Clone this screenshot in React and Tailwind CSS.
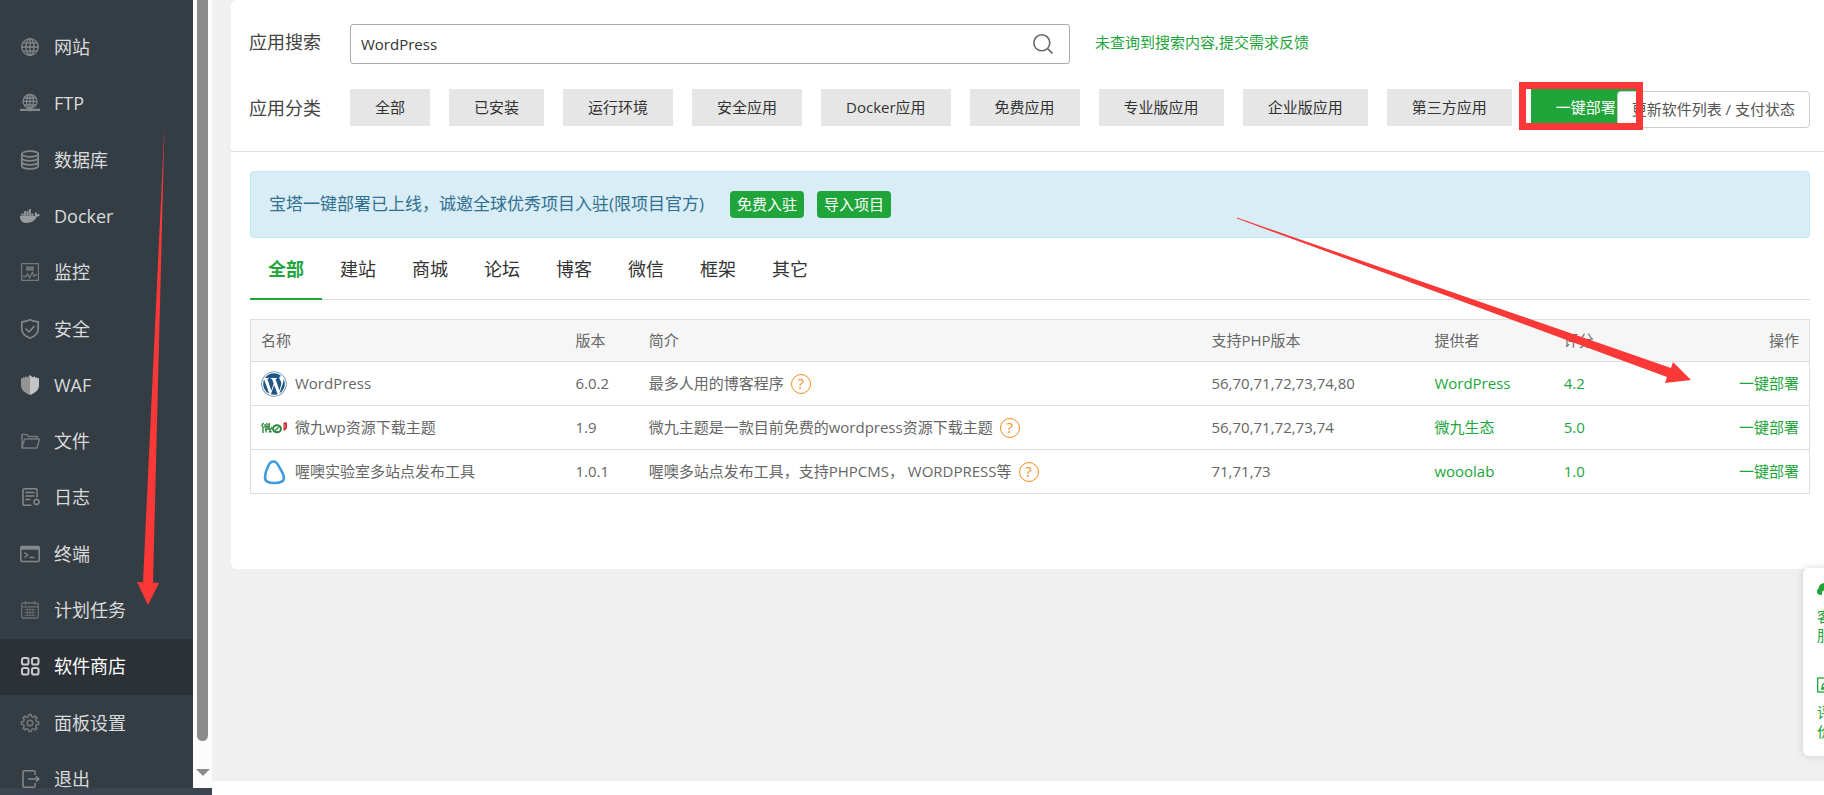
import React, { useState } from "react";
import { FaDocker, FaWordpress } from "react-icons/fa";

const Icon = ({ children, className = "", width = 1.3 }) => (
  <svg
    viewBox="0 0 20 20"
    className={`size-5 shrink-0 ${className}`}
    fill="none"
    stroke="currentColor"
    strokeWidth={width}
    strokeLinejoin="round"
    aria-hidden="true"
  >
    {children}
  </svg>
);

const GlobeIcon = () => (
  <Icon>
    <circle cx="10" cy="10" r="8.3" />
    <ellipse cx="10" cy="10" rx="4" ry="8.3" />
    <path d="M10 1.7v16.6M1.7 10h16.6M3 5.8h14M3 14.2h14" />
  </Icon>
);

const FtpIcon = () => (
  <Icon>
    <circle cx="10" cy="8.4" r="7" />
    <ellipse cx="10" cy="8.4" rx="3.4" ry="7" />
    <path d="M10 1.4v14M3 8.4h14M4 5h12M4 12h12" />
    <path d="M0 16.8h20M8 17.2h4" strokeWidth="2.2" />
  </Icon>
);

const DatabaseIcon = () => (
  <Icon width={1.7}>
    <ellipse cx="10" cy="4" rx="8.2" ry="2.8" />
    <path d="M1.8 4v12c0 1.5 3.7 2.8 8.2 2.8s8.2-1.3 8.2-2.8V4M1.8 8c0 1.5 3.7 2.8 8.2 2.8s8.2-1.3 8.2-2.8M1.8 12c0 1.5 3.7 2.8 8.2 2.8s8.2-1.3 8.2-2.8" />
  </Icon>
);

const DockerIcon = () => <FaDocker className="size-5 shrink-0 text-[#999c9e]" aria-hidden="true" />;

const MonitorIcon = () => (
  <Icon className="text-[#73787c]">
    <rect x="1.6" y="1.6" width="16.8" height="16.8" />
    <path d="M6 5.3h8M6 7.5h8" strokeWidth="1.8" />
    <path d="M3 14.5h3l1.5-3 2 4.5 3-6 1.500 4.500 1-1.500h2" />
  </Icon>
);

const SafeIcon = () => (
  <Icon width={1.7}>
    <path d="M10 .8c2.5 1.400 5.300 1.900 8.200 2v7.400c0 4-3.500 7-8.200 9-4.700-2-8.200-5-8.200-9V2.800C4.700 2.700 7.500 2.200 10 .8z" />
    <path d="m5.500 9.500 3.500 3.500 5.500-6" />
  </Icon>
);

const WafIcon = () => (
  <svg viewBox="0 0 20 20" className="size-5 shrink-0" aria-hidden="true">
    <path d="M10 0v20c-5-2-9-5-9-9.500V3l2 .5V2l2 1V1.300l2.500 1z" fill="#949494" />
    <path d="M10 0v20c5-2 9-5 9-9.500V3l-2 .5V2l-2 1V1.300l-2.500 1z" fill="#c4c4c4" />
  </svg>
);

const FolderIcon = () => (
  <Icon className="text-[#73787c]" width={1.5}>
    <path d="M2 17V3.500h5l1.500 2h8.700V8" />
    <path d="M2 17 4.500 8h15L17 17z" />
  </Icon>
);

const LogIcon = () => (
  <Icon width={1.5}>
    <path d="M11.500 18.300H4.300c-.8 0-1.300-.5-1.300-1.300V3c0-.8.5-1.300 1.300-1.300h11.400c.8 0 1.300.5 1.300 1.300v7.500M5.500 5.500h9M5.500 9h9M5.500 12.500h5" />
    <circle cx="16.500" cy="15" r="2.500" />
  </Icon>
);

const TerminalIcon = () => (
  <Icon width={1.5}>
    <rect x=".8" y="2.500" width="18.400" height="15" rx="1" />
    <path d="M1 4.300h18" strokeWidth="2.800" />
    <path d="m4.500 8.500 3.200 2.500-3.200 2.500M9.500 13.500h5" />
  </Icon>
);

const CalendarIcon = () => (
  <Icon className="text-[#696f74]">
    <rect x="1.700" y="3" width="16.600" height="15" rx="2" />
    <path d="M5.500 1v4M14.500 1v4M2 6.800h16" />
    <path d="M4.500 9.500h11M4.500 12.500h11M4.500 15.300h11M7.300 8.500V16M10 8.500V16M12.700 8.500V16" strokeWidth=".9" />
  </Icon>
);

const StoreIcon = () => (
  <Icon width={2}>
    <rect x="2" y="2" width="6.500" height="6.500" rx="1.800" />
    <rect x="12" y="2" width="6.500" height="6.500" rx="1.800" />
    <rect x="2" y="12" width="6.500" height="6.500" rx="1.800" />
    <rect x="12" y="12" width="6.500" height="6.500" rx="1.800" />
  </Icon>
);

const SettingsIcon = () => (
  <Icon className="text-[#73787c]" width={1.5}>
    <path d="M8.400 3.600 8.700 1.500h2.600l.3 2.100 1.800.8 1.800-1.300 1.800 1.800-1.300 1.800.8 1.700 2.200.3v2.600l-2.200.3-.8 1.800 1.300 1.700-1.800 1.800-1.800-1.300-1.800.8-.3 2.100H8.700l-.3-2.100-1.800-.8-1.800 1.300L3 15.100l1.300-1.700-.8-1.800-2.100-.3V8.700l2.100-.3.8-1.700L3 4.900l1.800-1.800 1.800 1.300z" />
    <circle cx="10" cy="10" r="2.800" />
  </Icon>
);

const LogoutIcon = () => (
  <Icon width={1.5}>
    <path d="M15 6V3c0-.8-.5-1.300-1.300-1.300H4.300C3.500 1.700 3 2.200 3 3v14c0 .8.5 1.300 1.300 1.300h9.400c.8 0 1.300-.5 1.300-1.300v-3M8 10h11M15.800 7.300 19 10l-3.200 2.700" />
  </Icon>
);

const menuItems = [
  { name: "网站", icon: GlobeIcon },
  { name: "FTP", icon: FtpIcon },
  { name: "数据库", icon: DatabaseIcon },
  { name: "Docker", icon: DockerIcon },
  { name: "监控", icon: MonitorIcon },
  { name: "安全", icon: SafeIcon },
  { name: "WAF", icon: WafIcon },
  { name: "文件", icon: FolderIcon },
  { name: "日志", icon: LogIcon },
  { name: "终端", icon: TerminalIcon },
  { name: "计划任务", icon: CalendarIcon },
  { name: "软件商店", icon: StoreIcon },
  { name: "面板设置", icon: SettingsIcon },
  { name: "退出", icon: LogoutIcon },
];

const categories = [
  "全部",
  "已安装",
  "运行环境",
  "安全应用",
  "Docker应用",
  "免费应用",
  "专业版应用",
  "企业版应用",
  "第三方应用",
  "一键部署",
];

const tabs = ["全部", "建站", "商城", "论坛", "博客", "微信", "框架", "其它"];

const WordPressLogo = () => <FaWordpress className="size-[26px] text-[#1f5584]" aria-hidden="true" />;

const WeijiuLogo = () => (
  <svg viewBox="0 0 26 12" className="h-3 w-[26px]" fill="none" aria-hidden="true">
    <path
      d="M2.500 1 .5 4M2 4v7M4 2v3h4V2M6 1v4M4 7h4M5 7v3.500M8.500 1 8 6l2.500 4.500M11 5l-3 5.500"
      stroke="#2b8a3e"
      strokeWidth="1.400"
    />
    <ellipse cx="16" cy="6.800" rx="4" ry="3.500" stroke="#2b8a3e" strokeWidth="2" />
    <path d="m13.500 9 4.500-4" stroke="#2b8a3e" strokeWidth="1.400" />
    <path d="M22.500.5H26V6l-2 2.500h-1.500z" fill="#c8202c" />
    <path d="M24 2v4" stroke="#fff" strokeWidth=".5" />
  </svg>
);

const WoooLogo = () => (
  <svg viewBox="0 0 26 26" className="size-[26px]" fill="none" aria-hidden="true">
    <path
      d="M12.500 2.500c2.500 0 4 2 5.500 5 2 4 5 8 5 11.500 0 4-4.500 5-10 5s-9-1.500-9-5.500c0-3 1-7 3-11 1.300-3 3-5 5.500-5z"
      stroke="#3d9be0"
      strokeWidth="2.600"
    />
  </svg>
);

const apps = [
  {
    name: "WordPress",
    logo: WordPressLogo,
    version: "6.0.2",
    intro: "最多人用的博客程序",
    php: "56,70,71,72,73,74,80",
    provider: "WordPress",
    score: "4.2",
  },
  {
    name: "微九wp资源下载主题",
    logo: WeijiuLogo,
    version: "1.9",
    intro: "微九主题是一款目前免费的wordpress资源下载主题",
    php: "56,70,71,72,73,74",
    provider: "微九生态",
    score: "5.0",
  },
  {
    name: "喔噢实验室多站点发布工具",
    logo: WoooLogo,
    version: "1.0.1",
    intro: "喔噢多站点发布工具，支持PHPCMS， WORDPRESS等",
    php: "71,71,73",
    provider: "wooolab",
    score: "1.0",
  },
];

const Sidebar = () => (
  <div className="flex w-[212px] shrink-0 flex-col bg-[#3c454f] pb-[7px]">
    <div className="flex min-h-0 flex-1">
      <aside className="min-w-0 flex-1 overflow-hidden bg-[#353d44]">
        <nav className="mt-5 grid h-full auto-rows-fr">
          {menuItems.map((item) => {
            const active = item.name === "软件商店";
            return (
              <a
                key={item.name}
                href="#"
                className={`flex items-center gap-3.5 pb-0.5 pl-5 text-lg ${
                  active ? "bg-[#2c3138] text-white" : "text-[#d8dadb]"
                }`}
              >
                <span className={active ? "text-[#c8cacc]" : "text-[#84888b]"}>
                  <item.icon />
                </span>
                {item.name}
              </a>
            );
          })}
        </nav>
      </aside>
      <div className="flex w-[19px] flex-col items-center bg-[#fcfcfc]">
        <div className="w-[11px] flex-1 rounded-b-full bg-[#8b8b8b]" />
        <div className="flex h-[47px] items-end pb-3">
          <svg viewBox="0 0 14 7" className="h-[7px] w-3.5" aria-hidden="true">
            <path d="M0 0h14L7 7z" fill="#8b8b8b" />
          </svg>
        </div>
      </div>
    </div>
  </div>
);

const AppTable = () => (
  <table className="mt-[19px] w-full table-fixed border border-[#ddd] text-left text-[15px] text-[#666]">
    <thead>
      <tr className="h-[42px] bg-[#f6f6f6]">
        <th className="w-[20.2%] px-2.5 font-normal">名称</th>
        <th className="w-[4.7%] px-2.5 font-normal">版本</th>
        <th className="w-[36.1%] px-2.5 font-normal">简介</th>
        <th className="w-[14.3%] px-2.5 font-normal">支持PHP版本</th>
        <th className="w-[8.3%] px-2.5 font-normal">提供者</th>
        <th className="px-2.5 font-normal">评分</th>
        <th className="px-2.5 text-right font-normal">操作</th>
      </tr>
    </thead>
    <tbody>
      {apps.map((app) => (
        <tr key={app.name} className="h-11 border-t border-[#ddd]">
          <td className="px-2.5">
            <div className="flex items-center gap-2">
              <app.logo />
              {app.name}
            </div>
          </td>
          <td className="px-2.5">{app.version}</td>
          <td className="px-2.5">
            <div className="flex items-center gap-[7px]">
              {app.intro}
              <a
                href="#"
                className="flex size-5 items-center justify-center rounded-full border border-[#fc8a16] text-[15px] text-[#fc8a16]"
              >
                ?
              </a>
            </div>
          </td>
          <td className="px-2.5">{app.php}</td>
          <td className="px-2.5">
            <a href="#" className="text-[#20a53a]">{app.provider}</a>
          </td>
          <td className="px-2.5 text-[#20a53a]">{app.score}</td>
          <td className="px-2.5 text-right">
            <a href="#" className="text-[#20a53a]">一键部署</a>
          </td>
        </tr>
      ))}
    </tbody>
  </table>
);

const ServicePanel = () => (
  <div className="absolute top-[568px] -right-6 flex h-[188px] w-[45px] flex-col rounded-md bg-white pt-[15px] pl-3.5 text-[15px] leading-[19px] text-[#20a53a] shadow-[0_0_8px_rgba(0,0,0,0.15)]">
    <a href="#" className="flex w-4 flex-col">
      <svg viewBox="0 0 16 16" className="mb-2 size-4" fill="currentColor" aria-hidden="true">
        <path d="M8 0C4 0 1.800 2.500 1.500 5.500.5 6 0 7.300 0 8.800s.8 2.700 2.500 3L5 12V8.500C6.500 8 7.300 7 8 5.500 9 7 10 8 11.500 8.500V12l2 .200c1.700-.5 2.500-2 2.500-3.400s-.5-2.800-1.500-3.300C14.200 2.500 12 0 8 0z" />
      </svg>
      客服
    </a>
    <a href="#" className="mt-8 flex w-4 flex-col">
      <svg viewBox="0 0 16 16" className="mb-2.5 size-4" fill="none" stroke="currentColor" strokeWidth="1.300" aria-hidden="true">
        <rect x=".7" y="1" width="14.600" height="14" />
        <path d="m5 11 .5-3L11 3l2 2-5.500 5.500zM4 12h8" />
      </svg>
      评价
    </a>
  </div>
);

const Arrows = () => (
  <svg className="pointer-events-none absolute top-0 left-0 h-full w-full" fill="#fb3838" aria-hidden="true">
    <path d="M164.500 125 153 582.500l6 .5-11 22-11-23 6 .300z" />
    <path d="M1237 217.500 1671 368l2-6 18 18-26 3 2-6-430-158.500z" />
  </svg>
);

const App = () => {
  const [keyword, setKeyword] = useState("WordPress");
  const [category, setCategory] = useState("一键部署");
  const [tab, setTab] = useState("全部");

  return (
    <div className="relative flex h-screen overflow-hidden bg-white font-['Open_Sans','Noto_Sans_CJK_SC',sans-serif]">
      <Sidebar />
      <main className="mb-3.5 min-w-0 flex-1 bg-[#f0f0f0] pl-[19px]">
        <div className="rounded-l-md bg-white pb-[75px]">
          <div className="relative border-b border-[#ddd] pt-6 pr-3.5 pb-[25px] pl-[18px]">
            <div className="flex h-10 items-center">
              <label htmlFor="keyword" className="w-[101px] shrink-0 pb-1 text-lg text-[#444]">
                应用搜索
              </label>
              <div className="flex h-full w-[720px] items-center rounded-[3px] border border-[#aaa] pr-4">
                <input
                  id="keyword"
                  type="text"
                  value={keyword}
                  onChange={(e) => setKeyword(e.target.value)}
                  className="h-full min-w-0 flex-1 px-2.5 text-[15px] text-[#333] outline-none"
                />
                <button type="button" aria-label="应用搜索">
                  <Icon width={1.6} className="text-[#666]">
                    <circle cx="8.800" cy="8.800" r="8" />
                    <path d="m14.500 14.500 5 5" />
                  </Icon>
                </button>
              </div>
              <a href="#" className="ml-[25px] pb-1 text-[15px] text-[#20a53a]">
                未查询到搜索内容,提交需求反馈
              </a>
            </div>

            <div className="mt-[25px] flex h-[37px] items-center">
              <span className="w-[101px] shrink-0 text-lg text-[#444]">应用分类</span>
              <div className="flex h-full gap-[19px]">
                {categories.map((item) => (
                  <button
                    key={item}
                    type="button"
                    onClick={() => setCategory(item)}
                    className={`shrink-0 px-[25px] text-[15px] whitespace-nowrap ${
                      item === category ? "bg-[#20a53a] text-white" : "bg-[#e6e6e6] text-[#333]"
                    }`}
                  >
                    {item}
                  </button>
                ))}
              </div>
            </div>

            <button
              type="button"
              className="absolute top-[91px] right-3.5 h-[37px] rounded border border-[#ccc] bg-white px-3.5 text-[15px] text-[#555]"
            >
              更新软件列表 / 支付状态
            </button>
            <div className="pointer-events-none absolute top-[82px] right-[181px] h-12 w-[124px] border-[7px] border-[#fb3838]" />
          </div>

          <div className="pt-[19px] pr-3.5 pl-[19px]">
            <div className="flex h-[67px] items-center rounded border border-[#bce8f1] bg-[#d9edf7] px-[18px] text-[#31708f]">
              <p className="pb-0.5 text-[17px]">宝塔一键部署已上线，诚邀全球优秀项目入驻(限项目官方)</p>
              <div className="ml-[26px] flex gap-[13px]">
                <button type="button" className="h-[27px] rounded bg-[#20a53a] px-[7px] text-[15px] text-white">
                  免费入驻
                </button>
                <button type="button" className="h-[27px] rounded bg-[#20a53a] px-[7px] text-[15px] text-white">
                  导入项目
                </button>
              </div>
            </div>

            <div className="flex h-[62px] border-b border-[#ddd]">
              {tabs.map((item) => (
                <button
                  key={item}
                  type="button"
                  onClick={() => setTab(item)}
                  className={`-mb-px w-18 border-b-2 pt-0.5 text-lg ${
                    item === tab ? "border-[#20a53a] font-bold text-[#20a53a]" : "border-transparent text-[#333]"
                  }`}
                >
                  {item}
                </button>
              ))}
            </div>

            <AppTable />
          </div>
        </div>
      </main>
      <ServicePanel />
      <Arrows />
    </div>
  );
};

export default App;
